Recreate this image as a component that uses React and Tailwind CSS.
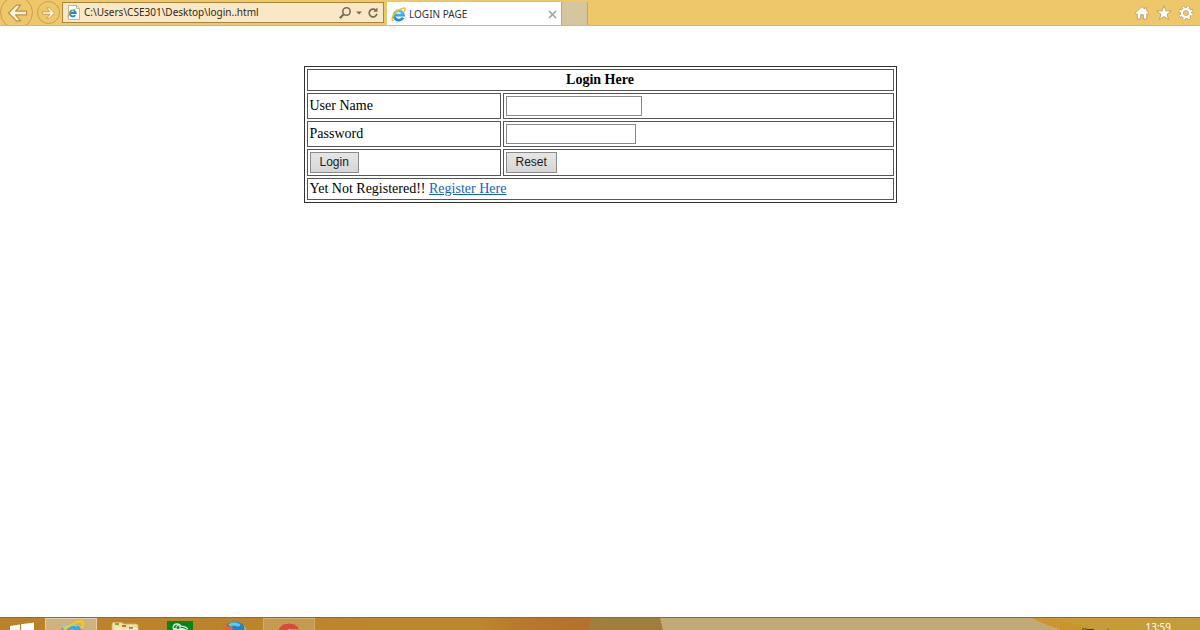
import { useState } from "react";

function IeLogo({ id, className }) {
  return (
    <svg viewBox="0 0 16 16" className={className} aria-hidden="true">
      <defs>
        <linearGradient id={id} x1="0" y1="0" x2="0" y2="1">
          <stop offset="0" stopColor="#5cc3f2" />
          <stop offset="1" stopColor="#1b86d2" />
        </linearGradient>
      </defs>
      <path d="M12.800 11.300A5 5 0 1 1 13.300 8.600H4.500" fill="none" stroke={`url(#${id})`} strokeWidth="3" />
      <path d="M2 14.500C-.2 12.500 3 7 7 4.200 10.800 1.500 14.300.400 14.900 1.800c.3.900-.1 1.900-.7 2.800" fill="none" stroke="#f3bd1d" strokeWidth="1.600" strokeLinecap="round" />
    </svg>
  );
}

function ArrowIcon({ flip, className }) {
  const d = "M3 10 9.500 3.500H13L8.800 8.400H18v3.200H8.800l4.200 4.900H9.500z";
  return (
    <svg viewBox="0 0 20 20" className={className} aria-hidden="true">
      <path d={d} fill="#fff5dc" stroke="#bd9445" strokeWidth="1" strokeLinejoin="round" transform={flip ? "rotate(180 10 10)" : undefined} />
    </svg>
  );
}

function BrowserBar() {
  const [address, setAddress] = useState("C:\\Users\\CSE301\\Desktop\\login..html");

  return (
    <header className="flex h-[26px] shrink-0 items-stretch overflow-hidden border-b border-[#dcb566] bg-[#efc76b] font-['Noto_Sans',sans-serif]">
      <nav className="flex items-center gap-1">
        <button type="button" aria-label="Back" className="flex size-[33px] shrink-0 items-center justify-center rounded-full border border-[#c99e4c]">
          <ArrowIcon className="size-6" />
        </button>
        <button type="button" aria-label="Forward" className="flex size-[23px] shrink-0 items-center justify-center rounded-full border border-[#c99e4c]">
          <ArrowIcon flip className="size-4" />
        </button>
      </nav>

      <div className="mt-[2px] ml-[2px] flex h-[21px] w-[322px] items-center border border-[#ac8541] bg-[#f9e8c5] pr-[3px] pl-1">
        <svg viewBox="0 0 14 15" className="h-[15px] w-[14px] shrink-0" aria-hidden="true">
          <path d="M1.500.5h8l3 3v11h-11z" fill="#fff" stroke="#a8a69c" strokeWidth=".8" />
          <path d="M9.500.5v3h3" fill="none" stroke="#a8a69c" strokeWidth=".8" />
          <path d="M8.200 10.300A3 3 0 1 1 8.800 8H3.500" fill="none" stroke="#1b88d6" strokeWidth="1.800" />
          <path d="M1 12.500C0 10.500 3 6 8.500 4" fill="none" stroke="#eab722" strokeWidth="1" />
        </svg>
        <input
          type="text"
          aria-label="Address"
          value={address}
          onChange={(e) => setAddress(e.target.value)}
          className="ml-[3px] min-w-0 flex-1 bg-transparent text-[10px] text-[#2e2a22] outline-none"
        />
        <button type="button" aria-label="Search" className="shrink-0">
          <svg viewBox="0 0 14 14" className="size-[14px]" aria-hidden="true">
            <circle cx="8.500" cy="5.500" r="3.700" fill="none" stroke="#7a6d56" strokeWidth="1.600" />
            <path d="M5.700 8.300 1.800 12.200" stroke="#7a6d56" strokeWidth="2.200" />
          </svg>
        </button>
        <button type="button" aria-label="Show addresses" className="ml-1 shrink-0">
          <svg viewBox="0 0 6 4" className="h-1 w-[6px]" aria-hidden="true">
            <path d="M0 .5h6l-3 3z" fill="#7a6d56" />
          </svg>
        </button>
        <button type="button" aria-label="Refresh" className="ml-1 shrink-0">
          <svg viewBox="0 0 14 14" className="size-[14px]" aria-hidden="true">
            <path d="M9.600 4A3.900 3.900 0 1 0 10.900 7.800" fill="none" stroke="#7a6d56" strokeWidth="1.700" />
            <path d="M11.500 1.500v4.300H7.200z" fill="#7a6d56" />
          </svg>
        </button>
      </div>

      <div className="mt-[2px] ml-[3px] flex w-[174px] items-center bg-white pt-px pr-1 pl-1">
        <IeLogo id="ie-tab" className="size-[15px] shrink-0" />
        <span className="ml-[3px] flex-1 text-[10px] whitespace-nowrap text-[#333333]">LOGIN PAGE</span>
        <button type="button" aria-label="Close tab">
          <svg viewBox="0 0 9 9" className="size-[9px]" aria-hidden="true">
            <path d="M1 1l7 7M8 1 1 8" stroke="#a0a0a0" strokeWidth="1.600" />
          </svg>
        </button>
      </div>
      <button type="button" aria-label="New tab" className="mt-[2px] w-[27px] border-x border-[#c2a667] bg-[#d6c69e]" />

      <div className="mr-[6px] ml-auto flex items-center gap-[6px]">
        <button type="button" aria-label="Home">
          <svg viewBox="0 0 16 16" className="size-4" aria-hidden="true">
            <path d="M8 1.500 1.200 8l1.300 1.300.7-.6V14h3.500v-4.300h2.600V14h3.500V8.700l.7.600L14.800 8 12.700 6V2.800h-2v1.200z" fill="#fff" stroke="#b39456" strokeWidth=".8" />
          </svg>
        </button>
        <button type="button" aria-label="Favorites">
          <svg viewBox="0 0 16 16" className="size-4" aria-hidden="true">
            <path d="m8 .8 1.900 5 5.300.2-4.200 3.300 1.600 5.200L8 11.500l-4.600 3 1.600-5.200L.8 6l5.300-.2z" fill="#fff" stroke="#b39456" strokeWidth=".8" />
          </svg>
        </button>
        <button type="button" aria-label="Tools">
          <svg viewBox="0 0 16 16" className="size-4" aria-hidden="true">
            <circle cx="8" cy="8" r="5.900" fill="none" stroke="#b39456" strokeWidth="3" strokeDasharray="2.900 1.734" />
            <circle cx="8" cy="8" r="4" fill="none" stroke="#b39456" strokeWidth="3.600" />
            <circle cx="8" cy="8" r="5.900" fill="none" stroke="#fff" strokeWidth="2" strokeDasharray="2 2.634" strokeDashoffset="-.45" />
            <circle cx="8" cy="8" r="4" fill="none" stroke="#fff" strokeWidth="2.400" />
          </svg>
        </button>
      </div>
    </header>
  );
}

const cell = "border border-[#555555] px-[2px] py-0";
const field = "block h-5 border border-[#8a8a8a] bg-white px-1 text-[12px] outline-none";
const button = "block h-[21px] border border-[#8a8a8a] bg-linear-to-b from-[#e6e6e6] to-[#d6d6d6] px-[9px] font-['Liberation_Sans',sans-serif] text-[12px] leading-[19px] text-[#1c1c1c]";

function LoginForm() {
  return (
    <form className="mx-auto w-full max-w-[593px]" onSubmit={(e) => e.preventDefault()}>
      <table className="w-full table-fixed border-separate border-spacing-[2px] border border-[#333333] font-['Liberation_Serif',serif] text-[14px] leading-5 text-black">
        <colgroup>
          <col className="w-[194px]" />
          <col />
        </colgroup>
        <thead>
          <tr className="h-[22px]">
            <th colSpan={2} className={cell}>Login Here</th>
          </tr>
        </thead>
        <tbody>
          <tr className="h-[26px]">
            <td className={cell}><label htmlFor="username">User Name</label></td>
            <td className={cell}><input id="username" type="text" className={`${field} w-[136px]`} /></td>
          </tr>
          <tr className="h-[26px]">
            <td className={cell}><label htmlFor="password">Password</label></td>
            <td className={cell}><input id="password" type="password" className={`${field} w-[130px]`} /></td>
          </tr>
          <tr className="h-[27px]">
            <td className={cell}><button type="submit" className={button}>Login</button></td>
            <td className={cell}><button type="reset" className={button}>Reset</button></td>
          </tr>
          <tr className="h-[22px]">
            <td colSpan={2} className={cell}>
              Yet Not Registered!! <a href="#register" className="text-[#1462c8] underline">Register Here</a>
            </td>
          </tr>
        </tbody>
      </table>
    </form>
  );
}

function Taskbar() {
  return (
    <footer className="relative flex h-[13px] shrink-0 items-start overflow-hidden border-t border-[#926a25] bg-[#bd862b]">
      {/* strip of wallpaper that shows through the bar */}
      <svg viewBox="0 0 1200 12" preserveAspectRatio="none" className="absolute inset-0 size-full" aria-hidden="true">
        <defs>
          <linearGradient id="wall-left">
            <stop offset="0" stopColor="#bb8128" />
            <stop offset=".8" stopColor="#bd882d" />
            <stop offset=".88" stopColor="#b8792b" />
            <stop offset="1" stopColor="#b3702b" />
          </linearGradient>
          <linearGradient id="wall-right">
            <stop offset="0" stopColor="#c9992f" />
            <stop offset="1" stopColor="#c39d3d" />
          </linearGradient>
        </defs>
        <path d="M0 0h592l-3 12H0z" fill="url(#wall-left)" />
        <path d="M592 0h68l3 12h-74z" fill="#a07e3c" />
        <path d="M660 0h400v12H663z" fill="#c2aa78" />
        <path d="M1032 0h168v12h-135q-18-4-33-12z" fill="url(#wall-right)" />
        <path d="M1032 0h12q25 5 50 12h-29q-18-4-33-12z" fill="#cc942a" opacity=".8" />
      </svg>

      <div className="relative flex">
        <button type="button" aria-label="Start" className="h-10 w-[45px]">
          <svg viewBox="0 0 45 40" className="block h-10 w-[45px]" aria-hidden="true">
            <path d="m10 8 10-1.500V18H10zM21 6.300 34 4.500V18H21zM10 19h10v10l-10-1.400zM21 19h13v12l-13-1.800z" fill="#fff" />
          </svg>
        </button>
        <button type="button" aria-label="Internet Explorer" className="flex h-10 w-[52px] justify-center border border-[#dfcfae] bg-[#d0b27c]">
          <svg viewBox="0 0 30 32" className="h-8 w-[30px]" aria-hidden="true">
            <path d="M24 21a9.500 9.500 0 1 1 .8-5H8" fill="none" stroke="#3aa9e0" strokeWidth="5.500" />
            <path d="M7 8.500q7-4.500 14-1.500" fill="none" stroke="#8ed8f7" strokeWidth="1.500" />
            <path d="M3 27C-1 21 6 11 14 6.500 20 2.500 26 1 27 3.500q.8 2-1.500 5" fill="none" stroke="#f5c623" strokeWidth="2.600" strokeLinecap="round" />
          </svg>
        </button>
        <button type="button" aria-label="File Explorer" className="ml-[14px] h-10 w-[28px]">
          <svg viewBox="0 0 28 40" className="block h-10 w-7" aria-hidden="true">
            <path d="M1 6q0-1.500 1.500-1.500h8L13 6h12q2 0 2 2v18H1z" fill="#f3dda0" stroke="#d6b463" strokeWidth=".8" />
            <path d="M3 9h9l2 1h13v15H3z" fill="#f9e9b8" />
            <path d="M4 6h4" stroke="#35a449" strokeWidth="1.500" />
            <path d="M11 8h4" stroke="#d53d34" strokeWidth="1.500" />
            <path d="M18 10h4" stroke="#258dd0" strokeWidth="1.500" />
          </svg>
        </button>
        <button type="button" aria-label="Store" className="ml-7 h-10 w-[26px]">
          <svg viewBox="0 0 26 40" className="block h-10 w-[26px]" aria-hidden="true">
            <path d="M0 3h26v26H0z" fill="#078617" />
            <path d="M6 10.500q0-4.500 4-4.500 3.500 0 4 3" fill="none" stroke="#d8efda" strokeWidth="1.300" />
            <path d="M6 10h10l5 2v10H6z" fill="#d8efda" />
            <circle cx="11" cy="9.500" r="2" fill="#078617" stroke="#d8efda" />
            <path d="M14 8.500q4-1 7 2.500" fill="none" stroke="#d8efda" strokeWidth="1.200" />
          </svg>
        </button>
        <button type="button" aria-label="Firefox" className="ml-[29px] h-10 w-7">
          <svg viewBox="0 0 28 40" className="block h-10 w-7" aria-hidden="true">
            <circle cx="13" cy="15.500" r="12" fill="#1f86c9" />
            <path d="M6 6.500q6-4 12-.5 1 2-2 2.500l-4-1-3 1z" fill="#63c5f0" />
            <path d="M1 17Q.500 9 4 5.500l1 2.500 5 .5q2 2-1 3.500v8H2z" fill="#e5682a" />
            <path d="M21.500 7q4 4 3.700 10l-2.200 3q1-7-1.500-13z" fill="#f1c348" />
          </svg>
        </button>
        <button type="button" aria-label="Chrome" className="ml-[13px] flex h-10 w-[52px] justify-center border border-[#cfae70] bg-[#c49b51] pt-[3px]">
          <svg viewBox="0 0 26 26" className="size-[26px]" aria-hidden="true">
            <circle cx="13" cy="13" r="12" fill="#f2c83a" />
            <path d="M2 8a12 12 0 0 0 10 17l5-9z" fill="#31935a" />
            <path d="M2.500 7.300A12 12 0 0 1 23.500 7.500H13L7 13z" fill="#d84a3d" />
            <circle cx="13" cy="13" r="5.500" fill="#fff" />
            <circle cx="13" cy="13" r="4.300" fill="#3b80cc" />
          </svg>
        </button>
      </div>

      <div className="relative mr-[29px] ml-auto flex items-start gap-[34px]">
        <svg viewBox="0 0 30 12" className="h-3 w-[30px]" aria-hidden="true">
          <path d="M2 12v-1h3v1M6 11.500h7" stroke="#4b3510" strokeWidth="1.200" fill="#fff" />
          <path d="m25 12 2-1.500 2 1.500" stroke="#947f45" fill="none" />
        </svg>
        <time className="pt-[3px] font-['Noto_Sans',sans-serif] text-[10px] leading-[13px] text-white">13:59</time>
      </div>
    </footer>
  );
}

export default function App() {
  return (
    <div className="flex min-h-screen flex-col bg-white">
      <BrowserBar />
      <main className="flex-1 pt-10">
        <LoginForm />
      </main>
      <Taskbar />
    </div>
  );
}
